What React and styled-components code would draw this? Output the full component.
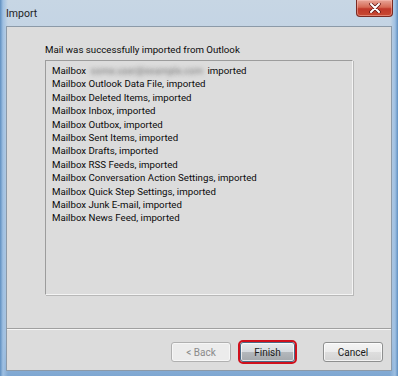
import React from "react";
import styled, { createGlobalStyle } from "styled-components";

const ROWS = [
  "Mailbox Outlook Data File, imported",
  "Mailbox Deleted Items, imported",
  "Mailbox Inbox, imported",
  "Mailbox Outbox, imported",
  "Mailbox Sent Items, imported",
  "Mailbox Drafts, imported",
  "Mailbox RSS Feeds, imported",
  "Mailbox Conversation Action Settings, imported",
  "Mailbox Quick Step Settings, imported",
  "Mailbox Junk E-mail, imported",
  "Mailbox News Feed, imported",
];

const FONT = `Roboto, "Open Sans", "Noto Sans", sans-serif`;

const GlobalStyle = createGlobalStyle`
  html, body {
    margin: 0;
    padding: 0;
    background: #dcdcdc;
  }
  * {
    box-sizing: border-box;
  }
`;

const App = () => {
  return (
    <>
      <GlobalStyle />
      <Window>
        <TitleBar>
          <Title>Import</Title>
          <CloseButton aria-label="Close">
            <svg width="12" height="10" viewBox="0 0 12 10">
              <path
                d="M2 1 L10 9 M10 1 L2 9"
                stroke="#5a1010"
                strokeWidth="3.4"
                strokeLinecap="round"
              />
              <path
                d="M2 1 L10 9 M10 1 L2 9"
                stroke="#ffffff"
                strokeWidth="2"
                strokeLinecap="round"
              />
            </svg>
          </CloseButton>
        </TitleBar>
        <Client>
          <Content>
            <Message>Mail was successfully imported from Outlook</Message>
            <ListBox>
              <Row>
                Mailbox <Blurred>some.user@example.com</Blurred> imported
              </Row>
              {ROWS.map((row) => (
                <Row key={row}>{row}</Row>
              ))}
            </ListBox>
          </Content>
          <Footer>
            <Button disabled>&lt; Back</Button>
            <Button focused>Finish</Button>
            <Button $wide>Cancel</Button>
          </Footer>
        </Client>
      </Window>
    </>
  );
};

const Window = styled.div`
  width: 398px;
  height: 376px;
  display: flex;
  flex-direction: column;
  padding: 0 6px 5px 6px;
  background: linear-gradient(
      90deg,
      #5f8fc0 0px,
      #9fc0e2 3px,
      rgba(200, 216, 232, 0) 8px,
      rgba(200, 216, 232, 0) 390px,
      #9fc0e2 395px,
      #5f8fc0 398px
    ),
    linear-gradient(180deg, #c7d6e4 0%, #c4d4e4 8%, #a9c3de 90%, #7ea7d2 100%);
  font-family: ${FONT};
  color: #1a1a1a;
`;

const TitleBar = styled.div`
  height: 26px;
  display: flex;
  align-items: flex-start;
  justify-content: space-between;
  margin-right: -1px;
`;

const Title = styled.div`
  font-size: 10.5px;
  line-height: 12px;
  padding-top: 8px;
  color: #1e1e1e;
`;

const CloseButton = styled.div`
  width: 37px;
  height: 17px;
  display: flex;
  align-items: center;
  justify-content: center;
  border: 1px solid #7a2a22;
  border-top: none;
  border-radius: 0 0 4px 4px;
  background: linear-gradient(180deg, #e8a598 0%, #d66a55 45%, #c0392a 55%, #c84a32 100%);
  box-shadow: inset 0 0 0 1px rgba(255, 200, 190, 0.45);
`;

const Client = styled.div`
  flex: 1;
  display: flex;
  flex-direction: column;
  border: 1px solid #8c9aa8;
  background: #dcdcdc;
`;

const Content = styled.div`
  flex: 1;
  display: flex;
  flex-direction: column;
  padding: 16px 38px 33px 38px;
`;

const Message = styled.div`
  font-size: 9.7px;
  line-height: 13px;
  margin-bottom: 4px;
  color: #0a0a0a;
`;

const ListBox = styled.div`
  flex: 1;
  display: flex;
  flex-direction: column;
  padding: 3px 6px;
  border: 1px solid;
  border-color: #9c9c9c #f4f4f4 #f4f4f4 #9c9c9c;
  box-shadow: 1px 1px 0 #b8b8b8;
  background: #dcdcdc;
`;

const Row = styled.div`
  font-size: 9.7px;
  line-height: 13.4px;
  white-space: nowrap;
  color: #0a0a0a;
`;

const Blurred = styled.span`
  color: transparent;
  text-shadow: 0 0 4px rgba(90, 90, 90, 0.85);
  padding: 0 2px;
`;

const Footer = styled.div`
  height: 42px;
  display: flex;
  align-items: flex-start;
  justify-content: flex-end;
  padding: 13px 8px 0 0;
  border-top: 1px solid #a0a0a0;
  box-shadow: inset 0 1px 0 #f6f6f6;
`;

const Button = styled.button.attrs(({ focused }) => ({ "data-focused": focused ? "1" : undefined }))`
  width: ${({ focused }) => (focused ? "55px" : "60px")};
  height: 20px;
  margin-left: ${({ focused, $wide }) => ($wide ? "28px" : focused ? "9px" : "0")};
  padding: 0;
  font-family: ${FONT};
  font-size: 10px;
  color: #1a1a1a;
  border: 1px solid #8e8f8f;
  border-radius: 3px;
  background: linear-gradient(180deg, #f4f4f4 0%, #ececec 50%, #dedede 51%, #d4d4d4 100%);
  box-shadow: inset 0 0 0 1px rgba(255, 255, 255, 0.7);

  &:disabled {
    color: #8a8a8a;
    border-color: #b0b0b0;
    background: #ececec;
    box-shadow: inset 0 0 0 1px #f6f6f6;
  }

  &[data-focused] {
    outline: 2px solid #d0101c;
    outline-offset: 0;
    border-color: #4a6a86;
    background: linear-gradient(180deg, #e6eaec 0%, #d6dade 50%, #b4b8bc 51%, #a4a8ac 100%);
  }
`;

export default App;
